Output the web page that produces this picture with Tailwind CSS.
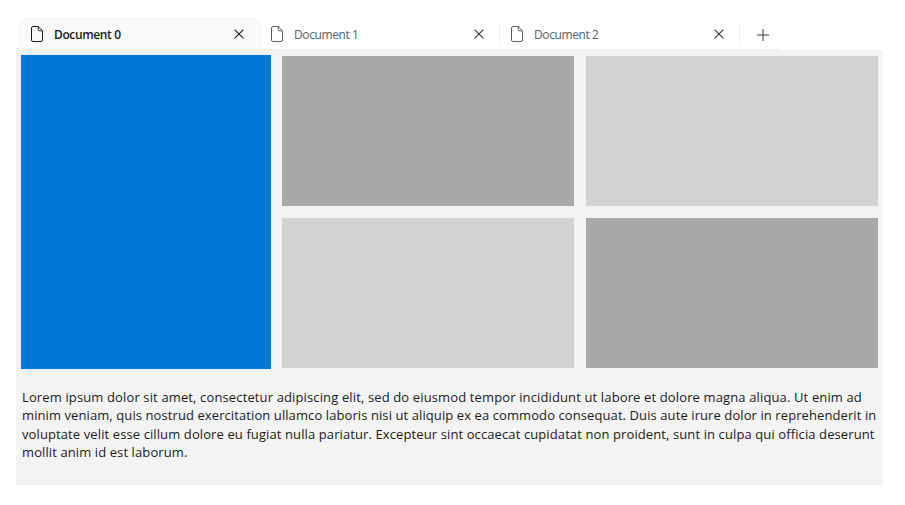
<!DOCTYPE html>
<html lang="en">
<head>
<meta charset="utf-8">
<title>Tab view</title>
<script src="https://cdn.jsdelivr.net/npm/@tailwindcss/browser@4"></script>
</head>
<body class="bg-white w-[905px] h-[505px] overflow-hidden font-['Open_Sans','Noto_Sans',sans-serif]">
<svg class="hidden">
  <symbol id="doc" viewBox="0 0 12 16"><path d="M2 .5H7.2L11.500 4.8V14a1.500 1.500 0 0 1-1.500 1.500H2A1.500 1.500 0 0 1 .5 14V2A1.500 1.500 0 0 1 2 .5ZM7.300 .6V3.800A1 1 0 0 0 8.300 4.800H11.4" fill="none" stroke="currentColor"/></symbol>
  <symbol id="close" viewBox="0 0 10 10"><path d="M.6.6 9.4 9.4M9.4.6.6 9.4" fill="none" stroke="currentColor" stroke-width="1.1"/></symbol>
</svg>
<main class="ml-4 w-[867px] pt-[18px]">
  <header class="relative flex h-8">
    <svg class="absolute left-0 top-0 w-[764px] h-8" viewBox="0 0 764 32">
      <path d="M0 31.5H764" stroke="#f0f0f0"/>
      <path d="M0 32Q3.5 31 3.5 27V8Q3.5.5 11 .5H237Q244.500 .5 244.500 8V27Q244.500 31 248 32Z" fill="#f9f9f9"/>
      <path d="M0 31.500Q3.500 31 3.500 27V8Q3.500 .5 11 .5H237Q244.500 .5 244.500 8V27Q244.500 31.500 249 31.500" fill="none" stroke="#f1f1f1"/>
    </svg>
    <div class="relative flex items-start w-[242px] pl-[15px] pt-2 text-[#1b1b1b]">
      <svg class="w-3 h-4"><use href="#doc"/></svg>
      <span class="ml-[11px] mt-px w-[180px] text-[12px] leading-4 font-semibold tracking-[-0.38px]">Document 0</span>
      <svg class="w-[10px] h-[10px] mt-[3px] shrink-0"><use href="#close"/></svg>
    </div>
    <div class="relative flex items-start w-[242px] pl-[13px] pt-2 text-[#606060]">
      <svg class="w-3 h-4"><use href="#doc"/></svg>
      <span class="ml-[11px] mt-px w-[180px] text-[12px] leading-4 tracking-[-0.4px]">Document 1</span>
      <svg class="w-[10px] h-[10px] mt-[3px] shrink-0 text-[#333]"><use href="#close"/></svg>
      <i class="ml-[15px] w-px h-4 bg-[#ebebeb]"></i>
    </div>
    <div class="relative flex items-start w-[240px] pl-[11px] pt-2 text-[#606060]">
      <svg class="w-3 h-4"><use href="#doc"/></svg>
      <span class="ml-[11px] mt-px w-[180px] text-[12px] leading-4 tracking-[-0.4px]">Document 2</span>
      <svg class="w-[10px] h-[10px] mt-[3px] shrink-0 text-[#333]"><use href="#close"/></svg>
      <i class="ml-[15px] w-px h-4 bg-[#ebebeb]"></i>
    </div>
    <svg class="relative ml-[17px] mt-[11px] w-3 h-3" viewBox="0 0 12 12"><path d="M6 0V12M0 6H12" stroke="#3a3a3a"/></svg>
  </header>
  <section class="h-[435px] bg-[#f3f3f3] pt-[5px] px-[5px]">
    <div class="flex h-[314px]">
      <div class="w-[250px] bg-[#0078d7]"></div>
      <div class="ml-[11px] mt-px grid grid-cols-[292px_292px] grid-rows-[150px_150px] gap-3">
        <div class="bg-[#a9a9a9]"></div>
        <div class="bg-[#d3d3d3]"></div>
        <div class="bg-[#d3d3d3]"></div>
        <div class="bg-[#a9a9a9]"></div>
      </div>
    </div>
    <p class="ml-px mt-[18.9px] text-[13px] leading-[18.500px] text-[#1b1b1b] whitespace-nowrap">
      <span class="block tracking-[0.131px]">Lorem ipsum dolor sit amet, consectetur adipiscing elit, sed do eiusmod tempor incididunt ut labore et dolore magna aliqua. Ut enim ad</span>
      <span class="block tracking-[0.09px]">minim veniam, quis nostrud exercitation ullamco laboris nisi ut aliquip ex ea commodo consequat. Duis aute irure dolor in reprehenderit in</span>
      <span class="block tracking-[0.105px]">voluptate velit esse cillum dolore eu fugiat nulla pariatur. Excepteur sint occaecat cupidatat non proident, sunt in culpa qui officia deserunt</span>
      <span class="block tracking-[0.1px]">mollit anim id est laborum.</span>
    </p>
  </section>
</main>
</body>
</html>
